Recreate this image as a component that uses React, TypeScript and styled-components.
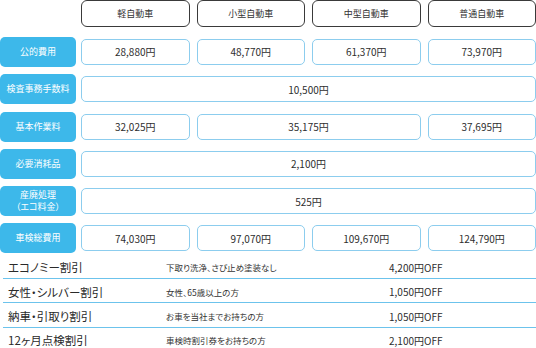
import React from "react";
import styled, { createGlobalStyle } from "styled-components";

const GlobalStyle = createGlobalStyle`
    html, body {
        margin: 0;
        padding: 0;
        background: #ffffff;
    }

    body {
        font-family: "Noto Sans CJK JP", "Noto Sans", sans-serif;
        font-feature-settings: "palt";
        color: #333333;
    }
`;

const Page = styled.div`
    width: 536px;
    height: 348px;
    overflow: hidden;
    display: flex;
    flex-direction: column;
`;

const PriceTable = styled.div`
    display: flex;
    flex-direction: column;
    gap: 7.3px;
`;

const Row = styled.div<{ $head?: boolean }>`
    display: flex;
    align-items: center;
    height: ${(p) => (p.$head ? "27px" : "30px")};
    margin-bottom: ${(p) => (p.$head ? "2.7px" : "0")};
`;

const Label = styled.div`
    width: 76px;
    height: 30px;
    flex-shrink: 0;
    margin-right: 5px;
    border-radius: 5px;
    background-color: #3db8ea;
    color: #ffffff;
    font-size: 9px;
    line-height: 1.35;
    display: flex;
    align-items: center;
    justify-content: center;
    text-align: center;
`;

const Spacer = styled.div`
    width: 81px;
    flex-shrink: 0;
`;

const Cells = styled.div`
    flex: 1;
    display: grid;
    grid-template-columns: repeat(4, 1fr);
    column-gap: 7px;
`;

const HeadCell = styled.div`
    height: 27px;
    box-sizing: border-box;
    border: 1.5px solid #3a3a3a;
    border-radius: 6px;
    display: flex;
    align-items: center;
    justify-content: center;
    font-size: 9px;
    color: #333333;
`;

const Cell = styled.div<{ $span?: number }>`
    grid-column: span ${(p) => p.$span || 1};
    height: 26px;
    box-sizing: border-box;
    border: 1.5px solid #8ccdee;
    border-radius: 5px;
    display: flex;
    align-items: center;
    justify-content: center;
    font-size: 10px;
    color: #2e2e2e;
`;

const Discounts = styled.div`
    margin-top: 1px;
    display: flex;
    flex-direction: column;
`;

const DiscountRow = styled.div`
    display: flex;
    align-items: center;
    box-sizing: border-box;
    height: 24.5px;
    margin-left: 3px;
    padding: 2px 0 0 5px;
    border-bottom: 1.5px solid #6cc3ec;

    &:last-child {
        border-bottom: none;
        padding-top: 0;
    }
`;

const DiscountName = styled.span`
    width: 158px;
    flex-shrink: 0;
    font-size: 11.5px;
    color: #2a2a2a;
`;

const DiscountNote = styled.span`
    width: 223px;
    flex-shrink: 0;
    font-size: 8.5px;
    color: #333333;
`;

const DiscountAmount = styled.span`
    font-size: 10px;
    color: #2e2e2e;
`;

const carTypes = ["軽自動車", "小型自動車", "中型自動車", "普通自動車"];

type Fee = { label: React.ReactNode; cells: { value: string; span?: number }[] };

const fees: Fee[] = [
    {
        label: "公的費用",
        cells: [{ value: "28,880円" }, { value: "48,770円" }, { value: "61,370円" }, { value: "73,970円" }],
    },
    { label: "検査事務手数料", cells: [{ value: "10,500円", span: 4 }] },
    {
        label: "基本作業料",
        cells: [{ value: "32,025円" }, { value: "35,175円", span: 2 }, { value: "37,695円" }],
    },
    { label: "必要消耗品", cells: [{ value: "2,100円", span: 4 }] },
    {
        label: (
            <>
                産廃処理
                <br />
                （エコ料金）
            </>
        ),
        cells: [{ value: "525円", span: 4 }],
    },
    {
        label: "車検総費用",
        cells: [{ value: "74,030円" }, { value: "97,070円" }, { value: "109,670円" }, { value: "124,790円" }],
    },
];

const discounts = [
    { name: "エコノミー割引", note: "下取り洗浄、さび止め塗装なし", amount: "4,200円OFF" },
    { name: "女性・シルバー割引", note: "女性、65歳以上の方", amount: "1,050円OFF" },
    { name: "納車・引取り割引", note: "お車を当社までお持ちの方", amount: "1,050円OFF" },
    { name: "12ヶ月点検割引", note: "車検時割引券をお持ちの方", amount: "2,100円OFF" },
];

const App: React.FC = () => {
    return (
        <>
            <GlobalStyle />
            <Page>
                <PriceTable>
                    <Row $head>
                        <Spacer />
                        <Cells>
                            {carTypes.map((t) => (
                                <HeadCell key={t}>{t}</HeadCell>
                            ))}
                        </Cells>
                    </Row>

                    {fees.map((f, i) => (
                        <Row key={i}>
                            <Label>{f.label}</Label>
                            <Cells>
                                {f.cells.map((c, j) => (
                                    <Cell key={j} $span={c.span}>
                                        {c.value}
                                    </Cell>
                                ))}
                            </Cells>
                        </Row>
                    ))}
                </PriceTable>

                <Discounts>
                    {discounts.map((d) => (
                        <DiscountRow key={d.name}>
                            <DiscountName>{d.name}</DiscountName>
                            <DiscountNote>{d.note}</DiscountNote>
                            <DiscountAmount>{d.amount}</DiscountAmount>
                        </DiscountRow>
                    ))}
                </Discounts>
            </Page>
        </>
    );
};

export default App;
